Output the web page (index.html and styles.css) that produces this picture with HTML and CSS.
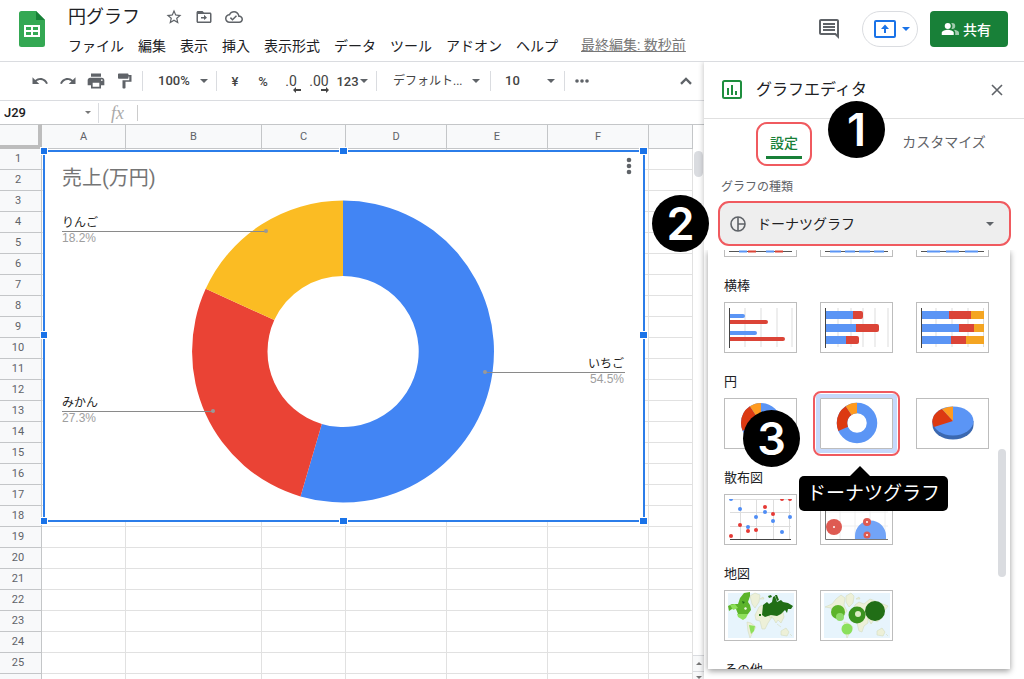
FILE: index.html
```html
<!DOCTYPE html>
<html lang="ja">
<head>
<meta charset="utf-8">
<title>円グラフ</title>
<meta name="viewport" content="width=device-width, initial-scale=1">
<link rel="stylesheet" href="styles.css">
</head>
<body>
<div class="app">
<header class="top">
  <svg class="logo" viewBox="0 0 26 36" aria-hidden="true"><path d="M2.500 0H17l9 9v24.500a2.500 2.500 0 0 1-2.500 2.500h-21A2.500 2.500 0 0 1 0 33.500v-31A2.500 2.500 0 0 1 2.500 0z" fill="#34a853"/><path d="M17 0l9 9h-9z" fill="#188038"/><path d="M5 14h16v12H5z" fill="#fff"/><path d="M7 16h5v3H7zM14 16h5v3h-5zM7 21h5v3H7zM14 21h5v3h-5z" fill="#34a853"/></svg>
  <div class="doc">
    <div class="doc-row">
      <h1 class="doc-title">円グラフ</h1>
      <button class="icon-btn" aria-label="スター"><svg class="i18" viewBox="0 0 24 24"><path d="M22 9.240l-7.190-.62L12 2 9.190 8.630 2 9.240l5.460 4.730L5.820 21 12 17.270 18.180 21l-1.630-7.030L22 9.240zM12 15.400l-3.760 2.270 1-4.280-3.320-2.880 4.380-.38L12 6.100l1.710 4.040 4.380.38-3.320 2.880 1 4.280L12 15.400z"/></svg></button>
      <button class="icon-btn" aria-label="移動"><svg class="i18" viewBox="0 0 24 24"><path d="M20 6h-8l-2-2H4c-1.100 0-2 .9-2 2v12c0 1.100.9 2 2 2h16c1.100 0 2-.9 2-2V8c0-1.100-.9-2-2-2zm0 12H4V8h16v10zM12 16l4-3-4-4v3H8v2h4z"/></svg></button>
      <button class="icon-btn" aria-label="保存状況"><svg class="i18" viewBox="0 0 24 24"><path d="M19.350 10.040C18.670 6.590 15.640 4 12 4 9.110 4 6.610 5.640 5.360 8.040 2.340 8.360 0 10.910 0 14c0 3.310 2.690 6 6 6h13c2.760 0 5-2.240 5-5 0-2.640-2.050-4.780-4.650-4.960zM19 18H6c-2.210 0-4-1.790-4-4 0-2.050 1.530-3.760 3.560-3.970l1.070-.11.5-.95C8.080 7.140 9.940 6 12 6c2.620 0 4.880 1.860 5.390 4.430l.3 1.500 1.530.11c1.560.1 2.780 1.410 2.780 2.960 0 1.650-1.350 3-3 3zm-9-3.800l-2.100-2.100-1.400 1.400L10 17l6-6-1.400-1.400z"/></svg></button>
    </div>
    <div class="doc-row">
      <nav class="menus">
        <button>ファイル</button><button>編集</button><button>表示</button><button>挿入</button><button>表示形式</button><button>データ</button><button>ツール</button><button>アドオン</button><button>ヘルプ</button>
      </nav>
      <a class="last-edit" href="#">最終編集: 数秒前</a>
    </div>
  </div>
  <div class="actions">
    <button class="icon-btn comment" aria-label="コメント"><svg class="i24" viewBox="0 0 24 24"><path d="M21.990 4c0-1.100-.89-2-1.990-2H4c-1.100 0-2 .9-2 2v12c0 1.100.9 2 2 2h14l4 4-.01-18zM20 4v13.170L18.830 16H4V4h16zM6 12h12v2H6zm0-3h12v2H6zm0-3h12v2H6z"/></svg></button>
    <button class="present" aria-label="画面共有"><svg class="present-icon" viewBox="0 0 22 18"><rect x="1" y="1" width="20" height="16" rx="1" fill="none" stroke="#1a73e8" stroke-width="2"/><path d="M11 4.500l4 4.500h-3v4h-2V9H7z" fill="#1a73e8"/></svg><span class="caret blue"></span></button>
    <button class="share"><svg class="i18" viewBox="0 0 24 24"><path d="M16.700 13.100c1.400.9 2.300 2.200 2.300 3.900v3h5v-3c0-2.200-3.600-3.500-7.300-3.900z" opacity=".6"/><path d="M15 12a4 4 0 0 0 0-8c-.5 0-.9.100-1.300.2a6 6 0 0 1 0 7.600c.4.100.8.200 1.300.2z" opacity=".6"/><circle cx="9" cy="8" r="4"/><path d="M9 13c-2.700 0-8 1.300-8 4v3h16v-3c0-2.700-5.300-4-8-4z"/></svg>共有</button>
  </div>
</header>
<div class="body">
<main class="main">
  <div class="toolbar">
    <div class="tools">
      <button class="tool" aria-label="元に戻す"><svg class="i18" viewBox="0 0 24 24"><path d="M12.500 8c-2.650 0-5.050.99-6.900 2.600L2 7v9h9l-3.620-3.620c1.390-1.160 3.160-1.880 5.120-1.880 3.540 0 6.550 2.310 7.600 5.500l2.370-.78C21.080 11.030 17.150 8 12.500 8z"/></svg></button>
      <button class="tool" aria-label="やり直し"><svg class="i18" viewBox="0 0 24 24"><path d="M18.400 10.600C16.550 8.990 14.150 8 11.500 8c-4.650 0-8.580 3.030-9.960 7.220L3.900 16c1.050-3.190 4.050-5.500 7.600-5.500 1.950 0 3.730.72 5.120 1.880L13 16h9V7l-3.600 3.600z"/></svg></button>
      <button class="tool" aria-label="印刷"><svg class="i20" viewBox="0 0 24 24"><path d="M19 8H5c-1.660 0-3 1.340-3 3v6h4v4h12v-4h4v-6c0-1.660-1.340-3-3-3zm-3 11H8v-5h8v5zm3-7c-.55 0-1-.45-1-1s.45-1 1-1 1 .45 1 1-.45 1-1 1zm-1-9H6v4h12V3z"/></svg></button>
      <button class="tool" aria-label="書式を貼り付け"><svg class="i18" viewBox="0 0 24 24"><path d="M18 4V3c0-.55-.45-1-1-1H5c-.55 0-1 .45-1 1v5c0 .55.45 1 1 1h12c.55 0 1-.45 1-1V6h1v5h-9v10c0 .55.45 1 1 1h2c.55 0 1-.45 1-1v-8h8V4h-4z"/></svg></button>
    </div>
    <label class="pick zoom"><select aria-label="ズーム"><option>100%</option></select><span class="caret"></span></label>
    <div class="tools formats">
      <button class="tool">¥</button>
      <button class="tool">%</button>
      <button class="tool dec" aria-label="小数点以下の桁数を減らす"><span>.0</span><svg class="arrow" viewBox="0 0 8 6"><path d="M3 0L0 3l3 3V4h5V2H3z"/></svg></button>
      <button class="tool dec" aria-label="小数点以下の桁数を増やす"><span>.00</span><svg class="arrow" viewBox="0 0 8 6"><path d="M5 0l3 3-3 3V4H0V2h5z"/></svg></button>
      <button class="tool num">123<span class="caret"></span></button>
    </div>
    <label class="pick font"><select aria-label="フォント"><option>デフォルト...</option></select><span class="caret"></span></label>
    <label class="pick size"><select aria-label="フォントサイズ"><option>10</option></select><span class="caret"></span></label>
    <button class="more" aria-label="その他"><svg class="dots" viewBox="0 0 14 4"><circle cx="2" cy="2" r="1.800"/><circle cx="7" cy="2" r="1.800"/><circle cx="12" cy="2" r="1.800"/></svg></button>
    <button class="collapse" aria-label="メニューを非表示"><svg class="i20" viewBox="0 0 24 24"><path d="M12 7.500l-7 7L7 16.500l5-5 5 5 2-2z"/></svg></button>
  </div>
  <div class="formula">
    <input class="name-box" aria-label="名前ボックス" value="J29"><span class="caret small"></span>
    <span class="fx">fx</span>
    <input class="fx-input" aria-label="数式">
  </div>
  <div class="sheet">
    <table class="grid">
      <colgroup><col class="c-head"><col class="c-a"><col class="c-b"><col class="c-c"><col class="c-d"><col class="c-d"><col class="c-d"><col></colgroup>
      <thead><tr><td class="corner"></td><th>A</th><th>B</th><th>C</th><th>D</th><th>E</th><th>F</th><th></th></tr></thead>
      <tbody>
      <tr><th>1</th><td><td><td><td><td><td><td></tr>
      <tr><th>2</th><td><td><td><td><td><td><td></tr>
      <tr><th>3</th><td><td><td><td><td><td><td></tr>
      <tr><th>4</th><td><td><td><td><td><td><td></tr>
      <tr><th>5</th><td><td><td><td><td><td><td></tr>
      <tr><th>6</th><td><td><td><td><td><td><td></tr>
      <tr><th>7</th><td><td><td><td><td><td><td></tr>
      <tr><th>8</th><td><td><td><td><td><td><td></tr>
      <tr><th>9</th><td><td><td><td><td><td><td></tr>
      <tr><th>10</th><td><td><td><td><td><td><td></tr>
      <tr><th>11</th><td><td><td><td><td><td><td></tr>
      <tr><th>12</th><td><td><td><td><td><td><td></tr>
      <tr><th>13</th><td><td><td><td><td><td><td></tr>
      <tr><th>14</th><td><td><td><td><td><td><td></tr>
      <tr><th>15</th><td><td><td><td><td><td><td></tr>
      <tr><th>16</th><td><td><td><td><td><td><td></tr>
      <tr><th>17</th><td><td><td><td><td><td><td></tr>
      <tr><th>18</th><td><td><td><td><td><td><td></tr>
      <tr><th>19</th><td><td><td><td><td><td><td></tr>
      <tr><th>20</th><td><td><td><td><td><td><td></tr>
      <tr><th>21</th><td><td><td><td><td><td><td></tr>
      <tr><th>22</th><td><td><td><td><td><td><td></tr>
      <tr><th>23</th><td><td><td><td><td><td><td></tr>
      <tr><th>24</th><td><td><td><td><td><td><td></tr>
      <tr><th>25</th><td><td><td><td><td><td><td></tr>
      <tr><th></th><td><td><td><td><td><td><td></tr>
      </tbody>
    </table>
    <div class="vscroll">
      <div class="vthumb"></div>
      <button class="vbtn" aria-label="上へ"><span class="caret up"></span></button>
      <button class="vbtn last" aria-label="下へ"><span class="caret small"></span></button>
    </div>
    <div class="chart">
      <svg class="chart-svg" viewBox="0 0 608 378" role="img" aria-label="売上(万円)">
        <rect x="4" y="4" width="600" height="370" fill="#fff" stroke="#2b7de9" stroke-width="2"/>
        <text x="22" y="38" class="ct">売上(万円)</text>
        <path d="M303 53.500A151 151 0 1 1 260.500 349.400L281.800 276.900A75.500 75.500 0 1 0 303 129z" fill="#4285f4"/>
        <path d="M260.500 349.400A151 151 0 0 1 165.700 141.800L234.300 173.100A75.500 75.500 0 0 0 281.800 276.900z" fill="#ea4335"/>
        <path d="M165.700 141.800A151 151 0 0 1 303 53.500V129A75.500 75.500 0 0 0 234.300 173.100z" fill="#fbbc23"/>
        <path d="M22 84.500H226M22 264.500H173M444 225.500H585" class="lead"/>
        <circle cx="226" cy="84" r="2" fill="#999"/><circle cx="173" cy="264" r="2" fill="#999"/><circle cx="445" cy="225" r="2" fill="#999"/>
        <text x="22" y="80" class="cl">りんご</text><text x="22" y="95" class="cp">18.2%</text>
        <text x="22" y="260" class="cl">みかん</text><text x="22" y="275" class="cp">27.3%</text>
        <text x="584" y="221" class="cl end">いちご</text><text x="584" y="236" class="cp end">54.5%</text>
        <g fill="#5f6368"><circle cx="589" cy="13" r="2.300"/><circle cx="589" cy="19" r="2.300"/><circle cx="589" cy="25" r="2.300"/></g>
        <g fill="#1a73e8" stroke="#fff"><rect x=".5" y=".5" width="7" height="7"/><rect x="299.500" y=".5" width="8" height="7"/><rect x="599.500" y=".5" width="8" height="7"/><rect x=".5" y="184.500" width="7" height="7"/><rect x="599.500" y="184.500" width="8" height="7"/><rect x=".5" y="370.500" width="7" height="7"/><rect x="299.500" y="370.500" width="8" height="7"/><rect x="599.500" y="370.500" width="8" height="7"/></g>
      </svg>
    </div>
  </div>
</main>
<aside class="panel">
  <div class="panel-head">
    <svg class="panel-icon" viewBox="0 0 20 20"><rect x="1" y="1" width="18" height="17" rx="1.500" fill="none" stroke="#1e8e3e" stroke-width="2"/><path d="M5 8h2v7H5zM9 5h2v10H9zM13 11h2v4h-2z" fill="#1e8e3e"/></svg>
    <h2>グラフエディタ</h2>
    <button class="close" aria-label="閉じる"><svg class="x" viewBox="0 0 12 12"><path d="M1 1l10 10M11 1L1 11" stroke="#5f6368" stroke-width="1.600"/></svg></button>
  </div>
  <div class="tabs" role="tablist">
    <div class="tab-cell"><button class="tab on" role="tab" aria-selected="true"><span>設定</span></button></div>
    <div class="tab-cell"><button class="tab" role="tab" aria-selected="false">カスタマイズ</button></div>
  </div>
  <span class="badge b1">1</span>
  <label class="field-label" for="kind">グラフの種類</label>
  <div class="kind">
    <svg class="kind-icon" viewBox="0 0 16 16"><g fill="none" stroke="#5f6368" stroke-width="1.600"><circle cx="8" cy="8" r="7"/><path d="M8 1v14M8 8h7"/></g></svg>
    <select id="kind"><option>ドーナツグラフ</option></select>
    <span class="caret"></span>
    <span class="badge b2">2</span>
  </div>
  <div class="menu">
    <div class="menu-list">
      <div class="thumbs cut">
        <button class="thumb" aria-label="縦棒 1"><svg viewBox="0 0 71 49"><path d="M4 44.500h63" stroke="#555"/><path d="M14 44.500h8M41 44.500h8" stroke="#5b95f5" stroke-width="2"/><path d="M23 44.500h8M50 44.500h8" stroke="#db4437" stroke-width="2"/></svg></button>
        <button class="thumb" aria-label="縦棒 2"><svg viewBox="0 0 71 49"><path d="M4 44.500h63" stroke="#555"/><path d="M9 44.500h11M24 44.500h10M38 44.500h11M53 44.500h10" stroke="#5b95f5" stroke-width="2"/></svg></button>
        <button class="thumb" aria-label="縦棒 3"><svg viewBox="0 0 71 49"><path d="M4 44.500h63" stroke="#555"/><path d="M10 44.500h13M29 44.500h13M48 44.500h13" stroke="#5b95f5" stroke-width="2"/></svg></button>
      </div>
      <h3>横棒</h3>
      <div class="thumbs">
        <button class="thumb" aria-label="横棒グラフ"><svg viewBox="0 0 71 49"><path d="M20 5v39M36 5v39M52 5v39M67 5v39" stroke="#ddd"/><path d="M5 11h13a2 2 0 0 1 0 4H5zM5 28h25a2 2 0 0 1 0 4H5z" fill="#5b95f5"/><path d="M5 17h36a2 2 0 0 1 0 4H5zM5 34h53a2 2 0 0 1 0 4H5z" fill="#db4437"/><path d="M4.500 5v40" stroke="#444"/></svg></button>
        <button class="thumb" aria-label="積み上げ横棒"><svg viewBox="0 0 71 49"><path d="M17 5v39M30 5v39M42 5v39M54 5v39M67 5v39" stroke="#ddd"/><path d="M5 8h27v8H5zM5 21h30v8H5zM5 33h20v8H5z" fill="#5b95f5"/><path d="M32 8h8a2 2 0 0 1 2 2v4a2 2 0 0 1-2 2h-8zM35 21h21a2 2 0 0 1 2 2v4a2 2 0 0 1-2 2H35zM25 33h11a2 2 0 0 1 2 2v4a2 2 0 0 1-2 2H25z" fill="#db4437"/><path d="M4.500 5v40" stroke="#444"/></svg></button>
        <button class="thumb" aria-label="100% 積み上げ横棒"><svg viewBox="0 0 71 49"><path d="M19 5v39M35 5v39M51 5v39M66.500 5v39" stroke="#ddd"/><path d="M5 8h27v8H5zM5 21h37v8H5zM5 33h29v8H5z" fill="#5b95f5"/><path d="M32 8h22v8H32zM42 21h15v8H42zM34 33h15v8H34z" fill="#db4437"/><path d="M54 8h13v8H54zM57 21h10v8H57zM49 33h18v8H49z" fill="#f4a522"/><path d="M4.500 5v40" stroke="#444"/></svg></button>
      </div>
      <h3>円</h3>
      <div class="thumbs">
        <div class="cell"><button class="thumb" aria-label="円グラフ"><svg viewBox="0 0 71 49"><g fill="none" stroke-width="20"><circle cx="36" cy="24" r="10" stroke="#5b95f5"/><circle cx="36" cy="24" r="10" stroke="#dc3912" pathLength="100" stroke-dasharray="22 78" stroke-dashoffset="-43.600"/><circle cx="36" cy="24" r="10" stroke="#ff9a1f" pathLength="100" stroke-dasharray="9.400 90.600" stroke-dashoffset="-65.600"/></g></svg></button><span class="badge b3">3</span></div>
        <div class="cell"><button class="thumb picked" aria-label="ドーナツグラフ"><svg viewBox="0 0 71 49"><g fill="none" stroke-width="10.500"><circle cx="36" cy="24" r="15" stroke="#5b95f5"/><circle cx="36" cy="24" r="15" stroke="#dc3912" pathLength="100" stroke-dasharray="22 78" stroke-dashoffset="-43.600"/><circle cx="36" cy="24" r="15" stroke="#ff9a1f" pathLength="100" stroke-dasharray="9.400 90.600" stroke-dashoffset="-65.600"/></g></svg></button><span class="tip" role="tooltip">ドーナツグラフ</span></div>
        <button class="thumb" aria-label="3D 円グラフ"><svg viewBox="0 0 71 49"><path d="M15.500 22v4a20.500 14.500 0 0 0 41 0v-4z" fill="#3b68b0"/><ellipse cx="36" cy="22" rx="20.500" ry="14.500" fill="#5b95f5"/><path d="M36 22L17 28A20.500 14.500 0 0 1 25 10z" fill="#dc3912"/><path d="M36 22L25 10A20.500 14.500 0 0 1 36 7.500z" fill="#ff9a1f"/></svg></button>
      </div>
      <h3>散布図</h3>
      <div class="thumbs">
        <button class="thumb" aria-label="散布図"><svg viewBox="0 0 71 49"><path d="M15.500 5v39M31.500 5v39M48.500 5v39M64.500 5v39M5 4.500h61M5 17.500h61M5 31.500h61" stroke="#ddd"/><path d="M5 44.500h61" stroke="#444"/><g fill="#4f8df5"><path d="M4 4h4a2 2 0 0 1-4 0z"/><circle cx="15" cy="14" r="2"/><circle cx="31" cy="22" r="2"/><circle cx="40" cy="17" r="2"/><circle cx="48" cy="26" r="2"/><circle cx="23" cy="32" r="2"/><circle cx="65" cy="22" r="2"/><circle cx="57" cy="37" r="2"/></g><g fill="#e53935"><path d="M55 4h4a2 2 0 0 1-4 0zM63 4h4a2 2 0 0 1-4 0z"/><circle cx="6" cy="41" r="2"/><circle cx="15" cy="30" r="2"/><circle cx="23" cy="36" r="2"/><circle cx="31" cy="35" r="2"/><circle cx="40" cy="12" r="2"/><circle cx="48" cy="19" r="2"/></g></svg></button>
        <button class="thumb" aria-label="バブルチャート"><svg viewBox="0 0 71 49"><path d="M19 5v39M34 5v39M49 5v39M64 5v39M5 17h62M5 31h62" stroke="#eee"/><path d="M34 44.500V41a15.500 15.500 0 0 1 31 0v3.500z" fill="#72a4f7"/><g fill="#de5a52"><circle cx="13" cy="32" r="8"/><circle cx="46" cy="27" r="4"/><circle cx="46" cy="40" r="3.500"/></g><g fill="#fff"><circle cx="13" cy="32" r="1"/><circle cx="46" cy="27" r="1"/><circle cx="46" cy="40" r="1"/></g><path d="M4.500 5v39.500H67" fill="none" stroke="#777"/></svg></button>
      </div>
      <h3>地図</h3>
      <div class="thumbs">
        <button class="thumb" aria-label="マップチャート"><svg viewBox="0 0 71 49"><path d="M3 2h66v45H3z" fill="#e7f4fc"/><g fill="#edf0d8" stroke="#d4dcc0" stroke-width=".6"><path d="M25 5l5-3 5 2-1 7-4 6-3-4zM22 31l4 1 5 4-3 5-3 6-2-7zM34 16l3-2 3 3 5 4 2 5-4 6-3 6-3 0-2-8-4-1-1-5zM44 21h14l1 5-3 6-3-3-2 3-3-5-4-1zM56 40l5-3 3 4-2 4-6-1zM52 33l4 3M65 43l2 2M35 8l3-2 1 2z"/></g><path d="M3 15l4-2h6l2-6 4-5 6-1v4l-2 6 2 3 1 5-3 4H13l-2-5-4 0-3 2z" fill="#5cb42b"/><path d="M12 23h11l-2 4-3 2-5-3zM24 34l6 1-1 5-3 3-1-4zM5 14l5-1 3 4-5 2z" fill="#8ee05b"/><path d="M38 14l4-3 2 2 3-2 1-5 2-1 2 6 4-2 2 2 5 1 5 3-2 3-3 0-1 4-2-3-4 4-4 2-6-1-6 2-3-2z" fill="#216e16"/><path d="M34 23h2v2h-2zM43 5l3-1 1 2-3 1zM50 4h2l2 5-2 1zM17 10l3 1-2 2z" fill="#216e16"/><path d="M19 17l2-1 1 2-2 1z" fill="#edf5df"/></svg></button>
        <button class="thumb" aria-label="マップ バブル"><svg viewBox="0 0 71 49"><path d="M3 2h66v45H3z" fill="#e7f4fc"/><g fill="#edf0d8" stroke="#d4dcc0" stroke-width=".6"><path d="M4 16l7-3 4-5 5-4 4 3-1 7 3 6-4 5-3 3-5-3-4-8zM25 5l5-3 3 3-1 7-4 4-3-5zM23 31l4 1 5 4-3 5-3 6-2-8zM34 14l4-3 5 2 6-5 8 3 10 4-3 4-3 3-1 6-4 3-3-2-3 4-3-6 0 5-4 3-2 6-3-1-2-8-4-2-1-5zM56 40l5-3 3 4-2 4-6-1zM65 43l2 2M35 8l3-2 1 2z"/></g><circle cx="17" cy="21" r="7" fill="#5cb42b"/><circle cx="19" cy="26" r="4" fill="#8fdb6a"/><circle cx="36" cy="24" r="8.500" fill="#3b931f"/><circle cx="37" cy="23" r="3" fill="#dcecc5"/><circle cx="54" cy="20" r="10" fill="#216e16"/><circle cx="26" cy="38" r="5.500" fill="#8be05c"/></svg></button>
      </div>
      <h3>その他</h3>
    </div>
    <div class="menu-scroll"></div>
  </div>
</aside>
</div>
</div>
</body>
</html>
```

FILE: styles.css
```css
* { box-sizing: border-box; }
body {
  margin: 0;
  background: #fff;
  color: #202124;
  font-family: Roboto, "Noto Sans CJK JP", sans-serif;
  font-size: 14px;
}
button, input, select {
  font: inherit;
  color: inherit;
  background: none;
  border: 0;
  padding: 0;
  margin: 0;
  border-radius: 0;
  outline: 0;
}
select { appearance: none; }
svg { display: block; fill: currentColor; flex: none; }
h1, h2, h3 { margin: 0; font-weight: 400; }
.app { display: flex; flex-direction: column; height: 100vh; overflow: hidden; }
.i18 { width: 18px; height: 18px; }
.i20 { width: 20px; height: 20px; }
.i24 { width: 24px; height: 24px; }
.caret {
  flex: none;
  width: 0;
  border: 4px solid transparent;
  border-top-color: #5f6368;
  border-bottom: 0;
}
.caret.blue { border-top-color: #1a73e8; }
.caret.small { border-width: 3px 3px 0; border-top-color: #777; }
.caret.up { border: 3px solid transparent; border-top: 0; border-bottom-color: #777; }

/* Header */
.top {
  display: flex;
  flex: none;
  height: 62px;
  padding: 0 16px 0 19px;
  border-bottom: 1px solid #dadce0;
}
.logo { width: 26px; height: 36px; margin-top: 11px; }
.doc { flex: 1; margin-left: 23px; padding-top: 3px; }
.doc-row { display: flex; align-items: center; height: 28px; }
.doc-title { font-size: 18px; line-height: 28px; margin-right: 25px; }
.icon-btn { color: #5f6368; margin-right: 12px; }
.menus { display: flex; gap: 14px; padding-top: 2px; white-space: nowrap; }
.menus button { line-height: 20px; }
.last-edit { margin-left: 23px; color: #777; white-space: nowrap; line-height: 20px; text-underline-offset: 1px; }
.actions { display: flex; align-items: center; height: 57px; }
.comment { margin-right: 21px; }
.present {
  display: flex;
  align-items: center;
  gap: 6px;
  height: 36px;
  padding: 0 7px 0 11px;
  border: 1px solid #dadce0;
  border-radius: 18px;
}
.present-icon { width: 22px; height: 18px; }
.share {
  display: flex;
  align-items: center;
  gap: 4px;
  height: 36px;
  margin-left: 12px;
  padding: 0 17px 0 11px;
  border-radius: 4px;
  background: #188038;
  color: #fff;
  font-weight: 500;
}

.body { display: flex; flex: 1; min-height: 0; }
.main { display: flex; flex-direction: column; flex: 1; min-width: 0; }

/* Toolbar */
.toolbar {
  display: flex;
  align-items: center;
  flex: none;
  height: 39px;
  padding-left: 26px;
  border-bottom: 1px solid #dadce0;
  color: #5f6368;
  font-weight: 500;
  font-size: 13px;
}
.tools { display: flex; align-items: center; }
.tool { display: flex; align-items: center; justify-content: center; width: 28px; height: 20px; }
.pick { display: flex; align-items: center; height: 20px; border-left: 1px solid #dadce0; }
.pick select { flex: 1; min-width: 0; line-height: 20px; color: #444; }
.zoom { width: 74px; margin-left: 4px; padding: 0 8px 0 15px; }
.formats { padding-left: 4px; border-left: 1px solid #dadce0; height: 20px; color: #444; }
.dec { position: relative; font-weight: 400; font-size: 14px; }
.arrow { position: absolute; right: 4px; bottom: -2px; width: 8px; height: 6px; }
.num { width: 34px; gap: 1px; margin-left: 2px; }
.font { width: 114px; margin-left: 7px; padding: 0 10px 0 16px; }
.font select { font-weight: 400; font-size: 12px; }
.size { width: 74px; padding: 0 9px 0 14px; }
.more { height: 20px; padding-left: 10px; border-left: 1px solid #dadce0; }
.dots { width: 14px; height: 4px; }
.collapse { margin-left: auto; margin-right: 8px; }

/* Formula bar */
.formula { display: flex; align-items: center; flex: none; height: 23px; }
.name-box { width: 85px; padding-left: 4px; font-size: 13px; font-weight: 500; }
.fx {
  margin-left: 7px;
  padding: 0 13px 0 12px;
  border-left: 1px solid #dadce0;
  color: #aaa;
  font: italic 18px/20px "Liberation Serif", serif;
}
.fx-input { flex: 1; min-width: 0; height: 16px; border-left: 1px solid #ccc; }

/* Sheet */
.sheet { position: relative; display: flex; flex: 1; min-height: 0; overflow: hidden; align-items: flex-start; }
.grid { flex: 1; width: 0; table-layout: fixed; border-collapse: separate; border-spacing: 0; }
.c-head { width: 42px; }
.c-a { width: 84px; }
.c-b { width: 136px; }
.c-c { width: 84px; }
.c-d { width: 101px; }
.grid td, .grid th { padding: 0; height: 21px; border-right: 1px solid #e1e1e1; border-bottom: 1px solid #e1e1e1; }
.grid th { background: #f8f9fa; border-color: #c4c6c8; color: #5f6368; font: 11px/18px Roboto, sans-serif; }
.grid tbody th { padding-right: 5px; }
.grid thead th, .grid .corner { height: 25px; border-top: 1px solid #c4c6c8; }
.grid .corner { background: #f8f9fa; border-right: 4px solid #bdbdbd; border-bottom: 4px solid #bdbdbd; }
.vscroll {
  display: flex;
  flex-direction: column;
  width: 11px;
  height: 100%;
  padding-top: 26px;
  border-top: 1px solid #c4c6c8;
}
.vthumb { width: 9px; height: 26px; margin: 0 auto auto 1px; border-radius: 5px; background: #dadce0; }
.vbtn { display: flex; flex: none; align-items: center; justify-content: center; height: 16px; border-top: 1px solid #dadce0; background: #f8f9fa; }
.vbtn.last { height: 8px; align-items: flex-end; }
.chart { position: absolute; left: 40px; top: 23px; }
.chart-svg { width: 608px; height: 378px; }
.ct { font: 20px Roboto, "Noto Sans CJK JP", sans-serif; fill: #757575; }
.cl { font: 12px "Noto Sans CJK JP", sans-serif; fill: #222; }
.cp { font: 12px "Liberation Sans", sans-serif; fill: #9e9e9e; }
.end { text-anchor: end; }
.lead { fill: none; stroke: #8a8a8a; stroke-width: 1; }

/* Chart editor */
.panel { position: relative; flex: none; width: 320px; background: #fff; box-shadow: -1px 0 5px rgba(0, 0, 0, .2); clip-path: inset(0 0 0 -80px); }
.panel-head { display: flex; align-items: center; height: 57px; padding: 0 21px 0 18px; border-bottom: 1px solid #e0e0e0; }
.panel-icon { width: 20px; height: 20px; }
.panel-head h2 { flex: 1; margin-left: 14px; font-size: 16px; line-height: 24px; }
.x { width: 12px; height: 12px; }
.tabs { display: flex; padding-top: 3px; }
.tab-cell { display: flex; flex: 1; justify-content: center; height: 44px; }
.tab { color: #5f6368; line-height: 20px; padding-bottom: 4px; }
.tab.on {
  display: flex;
  align-items: flex-end;
  justify-content: center;
  width: 56px;
  padding-bottom: 5px;
  border: 2px solid #f05a5f;
  border-radius: 11px;
  color: #188038;
  font-weight: 500;
}
.tab.on span { width: 36px; padding-bottom: 3px; border-bottom: 3px solid #188038; }
.field-label { display: block; margin: 12px 0 0 17px; color: #5f6368; font-size: 12px; line-height: 18px; }
.kind {
  position: relative;
  display: flex;
  align-items: center;
  height: 45px;
  margin: 5px 13px 0 14px;
  padding: 0 15px 0 10px;
  border: 2px solid #f05a5f;
  border-radius: 11px;
  background: #eee;
}
.kind-icon { width: 16px; height: 16px; }
.kind select { flex: 1; margin-left: 11px; line-height: 24px; }
.badge {
  position: absolute;
  z-index: 3;
  width: 57px;
  height: 57px;
  border-radius: 50%;
  background: #000;
  color: #fff;
  text-align: center;
  font: 600 45px/57px Inter, "Liberation Sans", sans-serif;
}
.b1 { left: 124px; top: 39px; }
.b2 { left: -68px; top: -8px; }
.b3 { left: 19px; top: 12px; }

/* Chart type menu */
.menu {
  position: absolute;
  left: 4px;
  right: 14px;
  top: 188px;
  bottom: 10px;
  background: #fff;
  box-shadow: 0 2px 6px rgba(0, 0, 0, .4);
  clip-path: inset(0 -10px -10px -10px);
}
.menu-list { height: 100%; padding-left: 16px; overflow: hidden; }
.menu h3 { height: 45px; padding-top: 19px; font-size: 13px; line-height: 20px; }
.thumbs { display: flex; gap: 23px; }
.thumbs.cut { height: 7px; align-items: flex-end; }
.cell { position: relative; }
.thumb { display: block; flex: none; width: 73px; height: 51px; border: 1px solid #bdbdbd; background: #fff; }
.thumb.picked { box-shadow: 0 0 0 4px #c6d9fb, 0 0 0 5px #fff; outline: 2px solid #f05a5f; outline-offset: 5px; border-radius: 1px; }
.tip {
  position: absolute;
  z-index: 4;
  left: -21px;
  top: 78px;
  padding: 0 8px;
  border-radius: 5px;
  background: #000;
  color: #fff;
  font-size: 19px;
  line-height: 35px;
  white-space: nowrap;
}
.tip::before {
  content: "";
  position: absolute;
  left: 50px;
  top: -10px;
  border: 11px solid transparent;
  border-top: 0;
  border-bottom-color: #000;
}
.menu-scroll { position: absolute; right: 4px; top: 199px; width: 8px; height: 128px; border-radius: 4px; background: #dadce0; }
```
